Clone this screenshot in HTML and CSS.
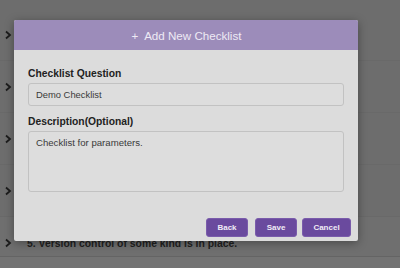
FILE: index.html
```html
<!DOCTYPE html>
<html>
<head>
<meta charset="utf-8">
<link rel="stylesheet" href="styles.css">
</head>
<body>
<div class="page">
  <div class="list">
    <div class="row"><svg class="chev" viewBox="0 0 8 10" width="8" height="10"><polyline points="2,1.5 6,5 2,8.5" fill="none" stroke="#1c1c1c" stroke-width="1.8"/></svg></div>
    <div class="row"><svg class="chev" viewBox="0 0 8 10" width="8" height="10"><polyline points="2,1.5 6,5 2,8.5" fill="none" stroke="#1c1c1c" stroke-width="1.8"/></svg></div>
    <div class="row"><svg class="chev" viewBox="0 0 8 10" width="8" height="10"><polyline points="2,1.5 6,5 2,8.5" fill="none" stroke="#1c1c1c" stroke-width="1.8"/></svg></div>
    <div class="row"><svg class="chev" viewBox="0 0 8 10" width="8" height="10"><polyline points="2,1.5 6,5 2,8.5" fill="none" stroke="#1c1c1c" stroke-width="1.8"/></svg></div>
    <div class="row row-last"><svg class="chev" viewBox="0 0 8 10" width="8" height="10"><polyline points="2,1.5 6,5 2,8.5" fill="none" stroke="#1c1c1c" stroke-width="1.8"/></svg><span class="item">5. Version control of some kind is in place.</span></div>
  </div>
  <div class="band"></div>

  <div class="modal">
    <div class="modal-head">+&nbsp; Add New Checklist</div>
    <div class="modal-body">
      <label class="field-label">Checklist Question</label>
      <div class="input">Demo Checklist</div>
      <label class="field-label second">Description(Optional)</label>
      <div class="textarea">Checklist for parameters.</div>
    </div>
    <div class="modal-foot">
      <button class="btn btn-back">Back</button>
      <button class="btn btn-save">Save</button>
      <button class="btn btn-cancel">Cancel</button>
    </div>
  </div>
</div>
</body>
</html>
```

FILE: styles.css
```css
html, body {
  margin: 0;
  padding: 0;
}
body {
  width: 400px;
  height: 268px;
  overflow: hidden;
  background: #6d6d6d;
  font-family: "Liberation Sans", Arial, sans-serif;
}
.page {
  position: relative;
  width: 400px;
  height: 268px;
  overflow: hidden;
}
.list {
  padding-top: 9px;
}
.row {
  height: 52px;
  display: flex;
  align-items: center;
  border-bottom: 1px solid #696969;
  box-sizing: border-box;
}
.row.row-last {
  height: 40px;
  padding-top: 12px;
  border-bottom: 1px solid #646464;
  background: #6f6f6f;
}
.band {
  height: 11px;
  background: #737373;
}
.chev {
  margin-left: 4px;
  margin-right: 15px;
  flex: none;
}
.item {
  font-size: 10.4px;
  font-weight: bold;
  color: #1f1f1f;
  padding-top: 2px;
}
.modal {
  position: absolute;
  left: 14px;
  top: 20px;
  width: 344px;
  height: 221px;
  background: #dcdcdc;
  border-radius: 2px;
  box-shadow: 0 2px 10px rgba(0,0,0,0.35);
  display: flex;
  flex-direction: column;
  overflow: hidden;
}
.modal-head {
  height: 30px;
  background: #9c8cba;
  color: #eeeaf5;
  font-size: 11.6px;
  display: flex;
  align-items: center;
  justify-content: center;
  padding-left: 1px;
}
.modal-body {
  padding: 17px 14px 0 14px;
  display: flex;
  flex-direction: column;
}
.field-label {
  font-size: 10.3px;
  font-weight: bold;
  line-height: 13px;
  color: #222;
}
.field-label.second {
  margin-top: 9px;
}
.input, .textarea {
  margin-top: 3px;
  border: 1px solid #c2c2c2;
  border-radius: 3px;
  background: #dddddd;
  font-size: 9.4px;
  color: #3a3a3a;
  box-sizing: border-box;
  padding-left: 7px;
}
.input {
  height: 23px;
  display: flex;
  align-items: center;
}
.textarea {
  height: 61px;
  padding-top: 5px;
  line-height: 12px;
  font-size: 9.6px;
}
.modal-foot {
  margin-top: auto;
  display: flex;
  justify-content: flex-end;
  padding: 0 7px 4px 0;
}
.btn {
  height: 19px;
  padding: 0;
  border: 1px solid #7a5cab;
  border-radius: 3px;
  background: #6a4a9e;
  color: #f0ecf6;
  font-family: "Liberation Sans", Arial, sans-serif;
  font-size: 8px;
  font-weight: bold;
  line-height: 17px;
}
.btn-back {
  width: 42px;
  margin-right: 7px;
}
.btn-save {
  width: 42px;
  margin-right: 5px;
}
.btn-cancel {
  width: 49px;
}
```
